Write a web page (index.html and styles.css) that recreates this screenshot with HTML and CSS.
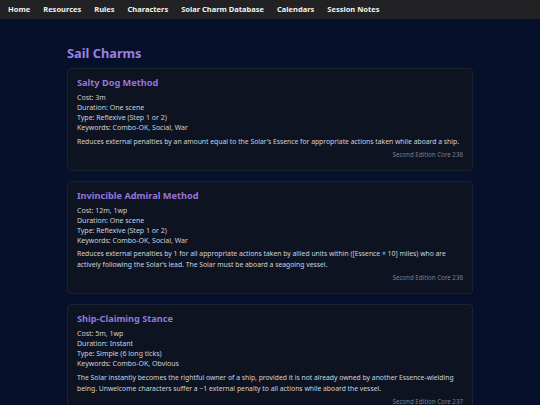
FILE: index.html
```html
<!DOCTYPE html>
<html lang="en">
<head>
<meta charset="utf-8">
<title>Sail Charms</title>
<link rel="stylesheet" href="styles.css">
</head>
<body>
<nav class="topnav">
  <a href="#">Home</a>
  <a href="#">Resources</a>
  <a href="#">Rules</a>
  <a href="#">Characters</a>
  <a href="#">Solar Charm Database</a>
  <a href="#">Calendars</a>
  <a href="#">Session Notes</a>
</nav>
<main class="content">
  <h1 class="page-title">Sail Charms</h1>

  <section class="charm">
    <h2 class="charm-name">Salty Dog Method</h2>
    <div class="meta">
      <div>Cost: 3m</div>
      <div>Duration: One scene</div>
      <div>Type: Reflexive (Step 1 or 2)</div>
      <div>Keywords: Combo-OK, Social, War</div>
    </div>
    <p class="desc">Reduces external penalties by an amount equal to the Solar’s Essence for appropriate actions taken while aboard a ship.</p>
    <div class="source">Second Edition Core 236</div>
  </section>

  <section class="charm">
    <h2 class="charm-name">Invincible Admiral Method</h2>
    <div class="meta">
      <div>Cost: 12m, 1wp</div>
      <div>Duration: One scene</div>
      <div>Type: Reflexive (Step 1 or 2)</div>
      <div>Keywords: Combo-OK, Social, War</div>
    </div>
    <p class="desc">Reduces external penalties by 1 for all appropriate actions taken by allied units within ([Essence × 10] miles) who are actively following the Solar’s lead. The Solar must be aboard a seagoing vessel.</p>
    <div class="source">Second Edition Core 236</div>
  </section>

  <section class="charm">
    <h2 class="charm-name">Ship-Claiming Stance</h2>
    <div class="meta">
      <div>Cost: 5m, 1wp</div>
      <div>Duration: Instant</div>
      <div>Type: Simple (6 long ticks)</div>
      <div>Keywords: Combo-OK, Obvious</div>
    </div>
    <p class="desc">The Solar instantly becomes the rightful owner of a ship, provided it is not already owned by another Essence-wielding being. Unwelcome characters suffer a −1 external penalty to all actions while aboard the vessel.</p>
    <div class="source">Second Edition Core 237</div>
  </section>
</main>
</body>
</html>
```

FILE: styles.css
```css
html, body {
  margin: 0;
  padding: 0;
}
body {
  background: #07102a;
  color: #cfd3db;
  font-family: "Noto Sans", "Open Sans", sans-serif;
}
.topnav {
  display: flex;
  align-items: center;
  gap: 13px;
  height: 19px;
  padding: 0 8px;
  background: #222224;
}
.topnav a {
  color: #f2f2f2;
  text-decoration: none;
  font-weight: 700;
  font-size: 7.5px;
  line-height: 19px;
}
.content {
  width: 406px;
  margin: 0 auto;
  padding-top: 26px;
}
.page-title {
  margin: 0 0 7px 0;
  color: #9c7fe2;
  font-size: 12.8px;
  line-height: 16px;
  font-weight: 700;
}
.charm {
  background: #0e1322;
  border: 1px solid #1b2132;
  border-radius: 4px;
  padding: 7px 9px 10px;
  margin-bottom: 10px;
}
.charm-name {
  margin: 0 0 3px 0;
  color: #9575dd;
  font-size: 9.2px;
  line-height: 14px;
  font-weight: 700;
}
.meta {
  font-size: 7px;
  line-height: 10px;
  color: #ccd0d8;
}
.desc {
  margin: 2.5px 0 3px 0;
  font-size: 6.8px;
  line-height: 11px;
  color: #d0d4dc;
}
.source {
  text-align: right;
  font-size: 6.2px;
  line-height: 10px;
  color: #7a808d;
}
```
